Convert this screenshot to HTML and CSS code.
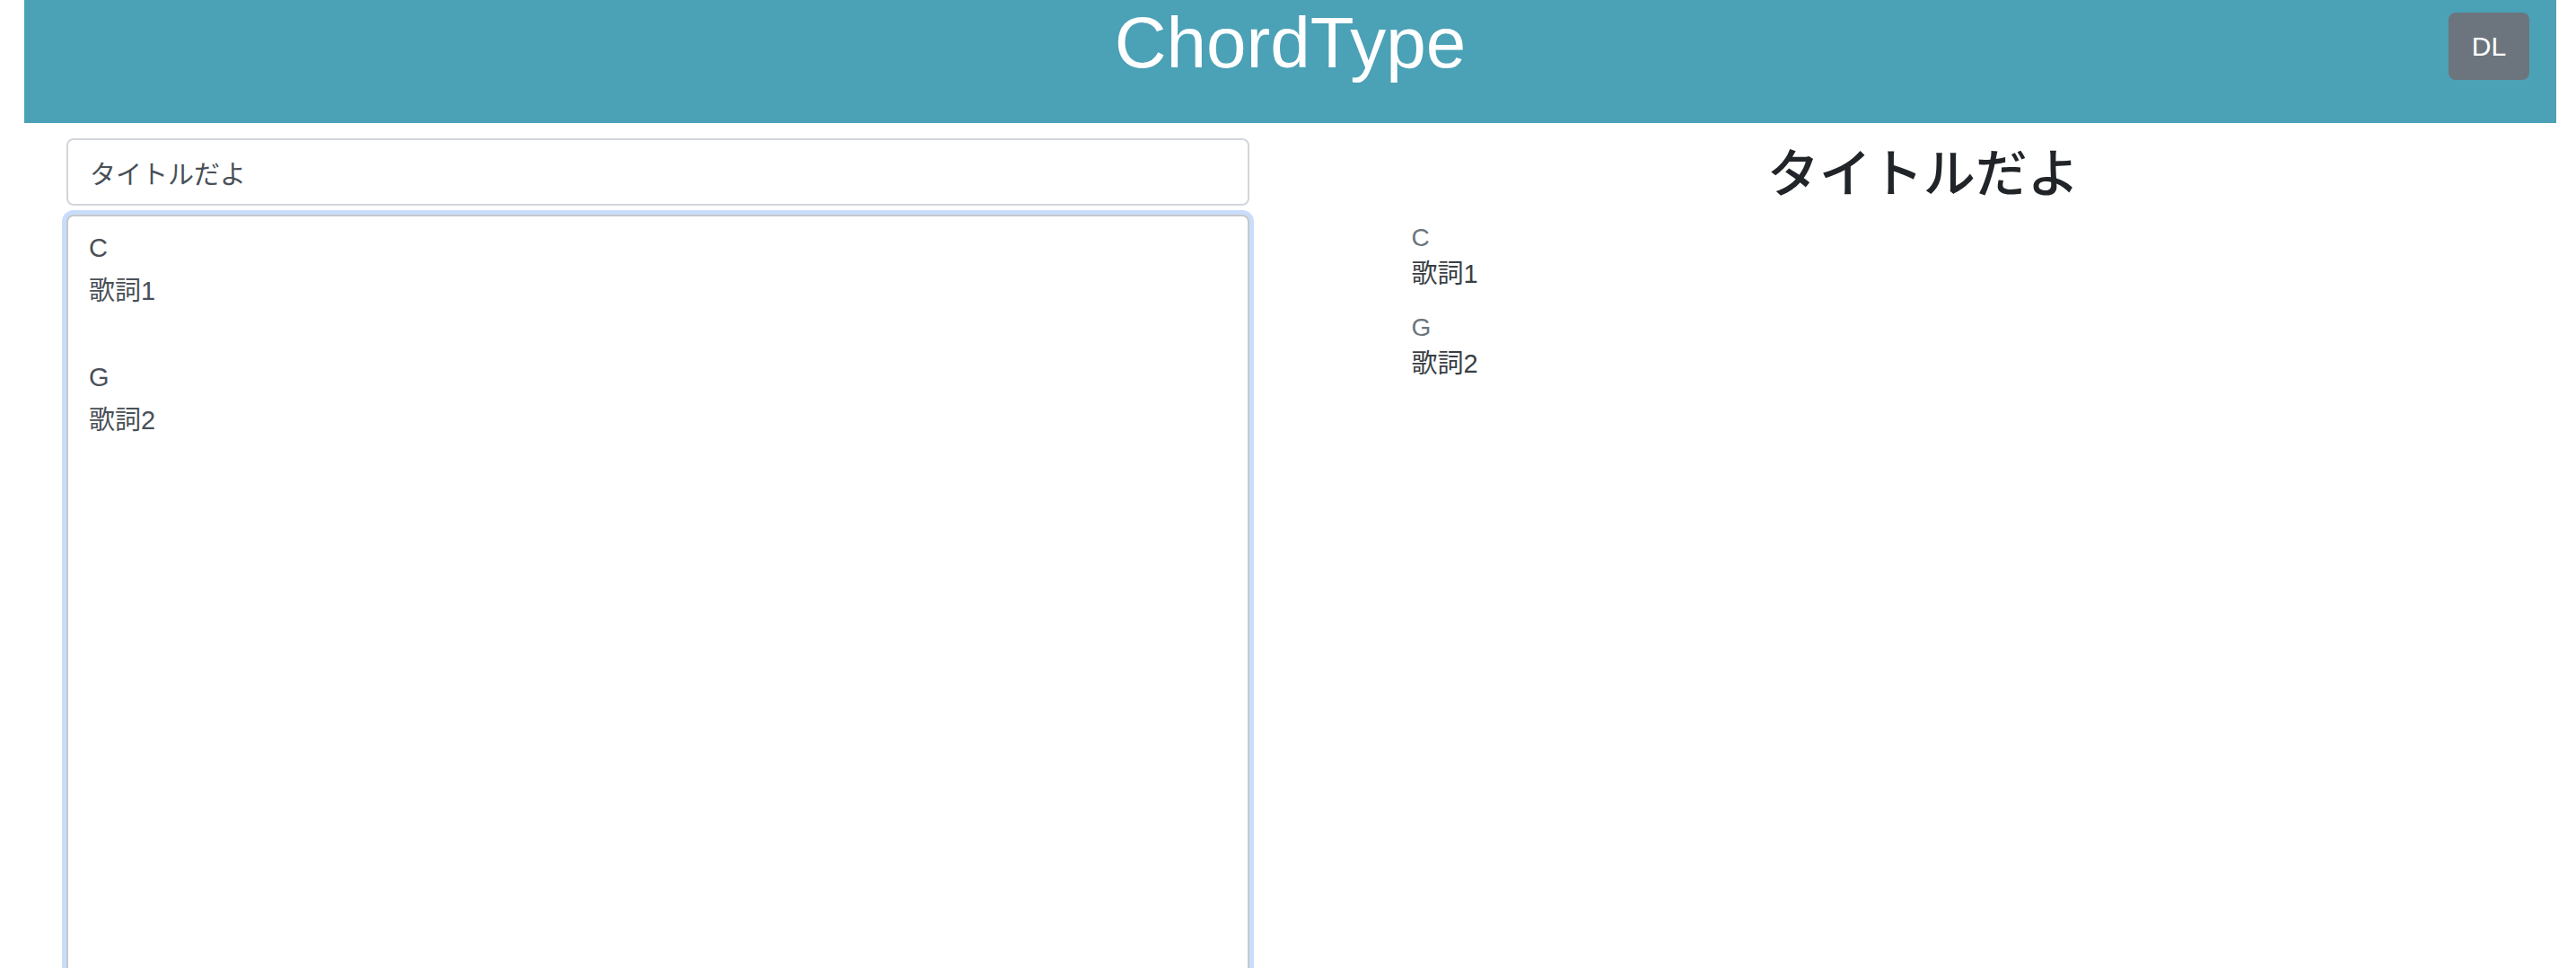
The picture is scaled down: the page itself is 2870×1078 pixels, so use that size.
FILE: index.html
```html
<!DOCTYPE html>
<html lang="ja">
<head>
<meta charset="utf-8">
<title>ChordType</title>
<link rel="stylesheet" href="styles.css">
</head>
<body>
<div class="app">
  <header class="topbar">
    <div class="topbar-spacer"></div>
    <h1 class="brand">ChordType</h1>
    <div class="topbar-actions">
      <button class="btn-dl" type="button">DL</button>
    </div>
  </header>
  <main class="workspace">
    <section class="editor">
      <input class="title-input" type="text" value="タイトルだよ">
      <textarea class="score-input">C
歌詞1

G
歌詞2</textarea>
    </section>
    <section class="preview">
      <h2 class="preview-title">タイトルだよ</h2>
      <div class="preview-body">
        <div class="block">
          <div class="chord">C</div>
          <div class="lyric">歌詞1</div>
        </div>
        <div class="block">
          <div class="chord">G</div>
          <div class="lyric">歌詞2</div>
        </div>
      </div>
    </section>
  </main>
</div>
</body>
</html>
```

FILE: styles.css
```css
html, body {
  margin: 0;
  padding: 0;
  height: 100%;
  overflow: hidden;
  background: #ffffff;
}

body {
  font-family: "Liberation Sans", "Noto Sans CJK JP", sans-serif;
  color: #212529;
}

.app {
  padding: 0 22px 0 27px;
}

.topbar {
  display: grid;
  grid-template-columns: 1fr auto 1fr;
  align-items: start;
  height: 137px;
  background: #4ba1b6;
  box-sizing: border-box;
}

.brand {
  margin: 0;
  font-family: "Liberation Sans", sans-serif;
  font-weight: 400;
  font-size: 80px;
  line-height: 96px;
  color: #ffffff;
  text-align: center;
}

.topbar-actions {
  display: flex;
  justify-content: flex-end;
  padding: 14px 30px 0 0;
}

.btn-dl {
  width: 90px;
  height: 75px;
  border: none;
  border-radius: 8px;
  background: #6c757d;
  color: #ffffff;
  font-family: "Liberation Sans", sans-serif;
  font-size: 30px;
  padding: 0;
}

.workspace {
  display: grid;
  grid-template-columns: 1fr 1fr;
}

.editor {
  display: flex;
  flex-direction: column;
  gap: 10px;
  padding: 17px 46px 0 47px;
}

.title-input {
  box-sizing: border-box;
  height: 75px;
  width: 100%;
  margin: 0;
  padding: 0 24px;
  border: 2px solid #d2d6db;
  border-radius: 8px;
  font-family: "Liberation Sans", "Noto Sans CJK JP", sans-serif;
  font-size: 29px;
  color: #495057;
  background: #ffffff;
  outline: none;
}

.score-input {
  box-sizing: border-box;
  width: 100%;
  height: 900px;
  margin: 0;
  padding: 11px 23px;
  border: 2px solid #c6c8ca;
  border-radius: 8px;
  box-shadow: 0 0 0 5px #c9ddfb;
  font-family: "Liberation Sans", "Noto Sans CJK JP", sans-serif;
  font-size: 29px;
  line-height: 48px;
  color: #495057;
  background: #ffffff;
  resize: none;
  outline: none;
}

.preview {
  padding: 17px 47px 0 47px;
}

.preview-title {
  margin: 0 0 20px 0;
  font-family: "Noto Sans CJK JP", sans-serif;
  font-weight: 500;
  font-size: 58px;
  line-height: 70px;
  text-align: center;
  color: #212529;
}

.preview-body {
  padding-left: 88px;
  display: flex;
  flex-direction: column;
  gap: 19px;
}

.chord {
  font-size: 28px;
  line-height: 42px;
  color: #6c757d;
}

.lyric {
  font-size: 29px;
  line-height: 39px;
  color: #3a3f44;
}
```
